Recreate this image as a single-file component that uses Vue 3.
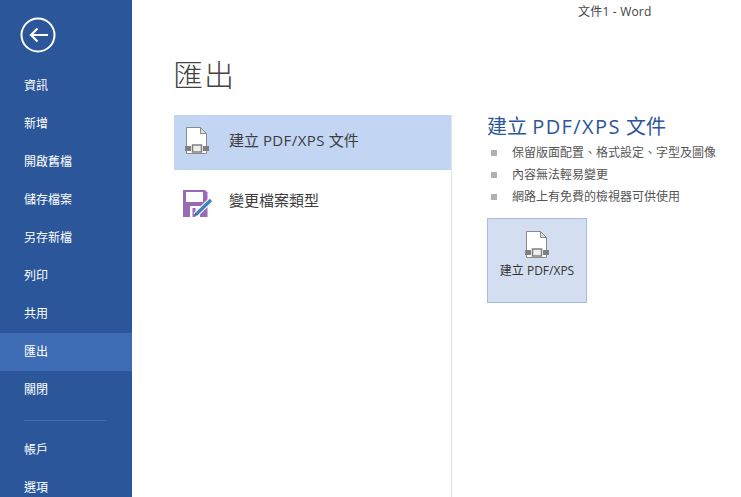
<template>
  <div class="backstage">
    <aside class="sidebar">
      <button class="back-btn">
        <svg width="36" height="36" viewBox="0 0 36 36">
          <circle cx="18" cy="18" r="16.5" fill="none" stroke="#fff" stroke-width="2" />
          <path d="M28 18H11M17.5 11.5L11 18l6.5 6.5" fill="none" stroke="#fff" stroke-width="2.2" />
        </svg>
      </button>
      <nav class="nav-main">
        <div v-for="item in mainItems" :key="item" class="nav-item" :class="{ active: item === '匯出' }">{{ item }}</div>
      </nav>
      <div class="nav-line"></div>
      <nav>
        <div v-for="item in bottomItems" :key="item" class="nav-item">{{ item }}</div>
      </nav>
    </aside>

    <main class="content">
      <div class="window-title">文件1 - Word</div>
      <h1 class="page-title">匯出</h1>
      <div class="columns">
        <div class="options">
          <div class="option selected">
            <svg class="option-icon" width="24" height="28" viewBox="0 0 24 28">
              <path d="M1.5 .5h14l6 6v20h-20z" fill="#fff" stroke="#8a8a8a" />
              <path d="M15.5 .5v6h6z" fill="#dcdcdc" stroke="#8a8a8a" />
              <rect x="0" y="19" width="6" height="5" fill="#7f7f7f" />
              <rect x="18" y="19" width="6" height="5" fill="#7f7f7f" />
              <rect x="7.5" y="18" width="9" height="7" fill="#eee" stroke="#7f7f7f" stroke-width="1.5" />
            </svg>
            <span class="option-text">建立 <span class="latin">PDF/XPS</span> 文件</span>
          </div>
          <div class="option">
            <svg class="option-icon floppy" width="30" height="27" viewBox="0 0 30 27">
              <path d="M0 0h22l2.5 2.5V27H0z" fill="#9a69b8" />
              <rect x="3" y="2" width="17" height="10" fill="#fff" />
              <rect x="7" y="16" width="10" height="11" fill="#fff" />
              <rect x="9.5" y="18" width="3" height="9" fill="#9a69b8" />
              <path d="M12.5 25L28 10" stroke="#fff" stroke-width="5.5" />
              <path d="M14 23.5L28 10" stroke="#3f7fc4" stroke-width="3.2" />
              <path d="M11.5 26l1-4 3 3z" fill="#2f5f96" />
            </svg>
            <span class="option-text">變更檔案類型</span>
          </div>
        </div>

        <section class="detail">
          <h2 class="detail-title">建立 <span class="latin">PDF/XPS</span> 文件</h2>
          <ul class="points">
            <li v-for="p in points" :key="p">{{ p }}</li>
          </ul>
          <button class="create-btn">
            <svg width="24" height="28" viewBox="0 0 24 28">
              <path d="M1.5 .5h14l6 6v20h-20z" fill="#fff" stroke="#8a8a8a" />
              <path d="M15.5 .5v6h6z" fill="#dcdcdc" stroke="#8a8a8a" />
              <rect x="0" y="19" width="6" height="5" fill="#7f7f7f" />
              <rect x="18" y="19" width="6" height="5" fill="#7f7f7f" />
              <rect x="7.5" y="18" width="9" height="7" fill="#eee" stroke="#7f7f7f" stroke-width="1.5" />
            </svg>
            <span>建立 PDF/XPS</span>
          </button>
        </section>
      </div>
    </main>
  </div>
</template>

<script setup>
const mainItems = ['資訊', '新增', '開啟舊檔', '儲存檔案', '另存新檔', '列印', '共用', '匯出', '關閉']
const bottomItems = ['帳戶', '選項']
const points = ['保留版面配置、格式設定、字型及圖像', '內容無法輕易變更', '網路上有免費的檢視器可供使用']
</script>

<style>
html, body { margin: 0; overflow: hidden; background: #fff; }
</style>

<style scoped>
.backstage {
  width: 741px;
  height: 497px;
  display: flex;
  overflow: hidden;
  font-family: "Open Sans", "Noto Sans CJK TC", sans-serif;
  color: #444;
}

.sidebar {
  width: 132px;
  flex-shrink: 0;
  background: #2b579a;
  color: #fff;
  overflow: hidden;
}

.back-btn {
  display: block;
  margin: 17px 0 0 20px;
  padding: 0;
  height: 36px;
  background: none;
  border: none;
}

.nav-main { margin-top: 14px; }

.nav-item {
  height: 38px;
  line-height: 38px;
  padding-left: 24px;
  font-size: 12px;
}

.nav-item.active { background: #3e6db5; }

.nav-line {
  width: 82px;
  height: 1px;
  margin: 11px 0 10px 24px;
  background: #3e6db5;
}

.content {
  flex: 1;
  position: relative;
  padding-left: 42px;
}

.window-title {
  position: absolute;
  top: 3px;
  left: 446px;
  font-size: 12px;
  line-height: 18px;
  letter-spacing: .2px;
  color: #444;
}

.page-title {
  margin: 0 0 0 -1px;
  padding-top: 53px;
  height: 43px;
  line-height: 43px;
  font-size: 30px;
  font-weight: 300;
  letter-spacing: 1px;
  color: #444;
}

.columns {
  display: flex;
  margin-top: 19px;
  height: 382px;
}

.options {
  width: 277px;
  flex-shrink: 0;
  border-right: 1px solid #e1e1e1;
}

.option {
  display: flex;
  align-items: center;
  height: 55px;
  padding-left: 11px;
  font-size: 15px;
  color: #3c3c3c;
}

.option:last-child { height: 62px; }
.option.selected { background: #c2d5f2; }

.option-icon {
  flex-shrink: 0;
  margin-right: 20px;
  margin-bottom: 3px;
}

.option-text { margin-bottom: 7px; }
.option:last-child .option-text { margin-bottom: 3px; }

.floppy {
  margin: 4px 16px 0 -2px;
}

.option .latin { letter-spacing: .4px; }

.detail { padding-left: 35px; }

.detail-title {
  margin: 0;
  font-size: 20px;
  font-weight: 400;
  line-height: 24px;
  color: #2b579a;
}

.detail-title .latin { letter-spacing: 1.4px; }

.points {
  list-style: none;
  margin: 3px 0 0;
  padding: 0;
}

.points li {
  position: relative;
  padding-left: 25px;
  height: 22px;
  line-height: 22px;
  font-size: 12px;
  color: #555;
}

.points li::before {
  content: "";
  position: absolute;
  left: 4px;
  top: 8px;
  width: 6px;
  height: 6px;
  background: #b1b1b1;
}

.create-btn {
  display: flex;
  flex-direction: column;
  align-items: center;
  box-sizing: border-box;
  width: 100px;
  height: 85px;
  margin: 10px 0 0;
  padding: 12px 0 0;
  background: #d3dff0;
  border: 1px solid #a3bde3;
  font: inherit;
  font-size: 12px;
  color: #333;
}

.create-btn span { margin-top: 3px; line-height: 18px; }
</style>
